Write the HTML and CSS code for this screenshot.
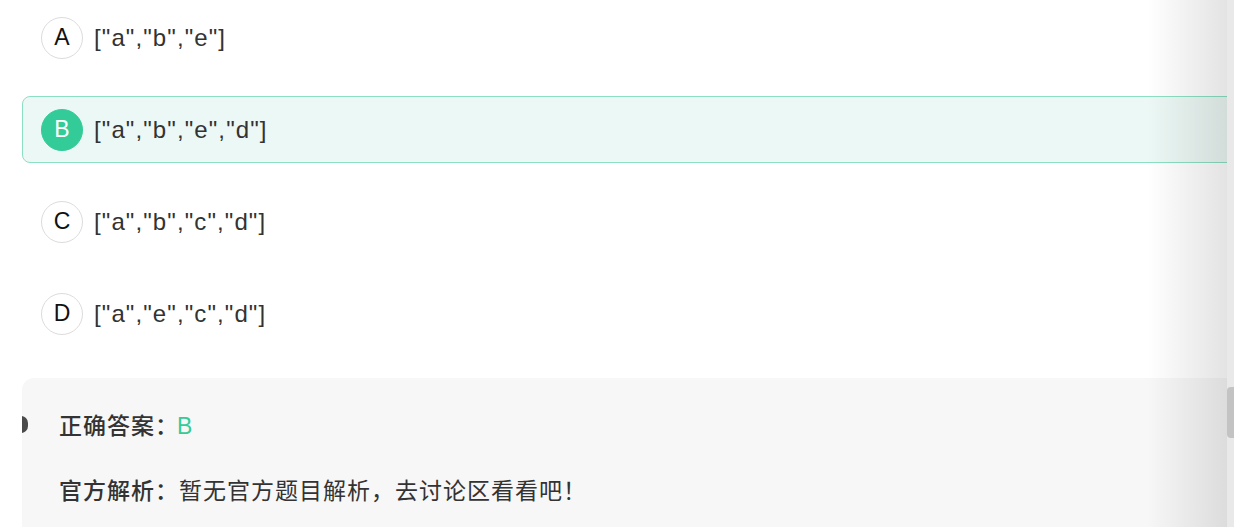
FILE: index.html
```html
<!DOCTYPE html>
<html lang="zh-CN">
<head>
    <meta charset="UTF-8">
    <meta name="viewport" content="width=device-width, initial-scale=1.0">
    <title>题目详情</title>
    <link rel="stylesheet" href="styles.css">
</head>
<body>

<div class="page">
    <div class="content">
        <div class="options">
            <div class="option">
                <span class="letter">A</span>
                <span class="option-text">["a","b","e"]</span>
            </div>
            <div class="option selected">
                <span class="letter">B</span>
                <span class="option-text">["a","b","e","d"]</span>
            </div>
            <div class="option">
                <span class="letter">C</span>
                <span class="option-text">["a","b","c","d"]</span>
            </div>
            <div class="option">
                <span class="letter">D</span>
                <span class="option-text">["a","e","c","d"]</span>
            </div>
        </div>

        <div class="analysis">
            <span class="marker"></span>
            <p class="answer-line"><span class="label">正确答案：</span><span class="answer">B</span></p>
            <p class="analysis-line"><span class="label">官方解析：</span>暂无官方题目解析，去讨论区看看吧！</p>
        </div>

        <div class="edge-shade"></div>
    </div>
    <div class="scrollbar">
        <div class="thumb"></div>
    </div>
</div>

</body>
</html>
```

FILE: styles.css
```css
body {
    margin: 0;
    background-color: #fff;
    font-family: "Liberation Sans", Arial, "Noto Sans CJK SC", sans-serif;
    color: #333;
    overflow: hidden;
}
.page {
    display: flex;
    height: 527px;
}
.content {
    position: relative;
    flex: 1;
    padding: 4px 0 0 22px;
    overflow: hidden;
}
.options {
    display: flex;
    flex-direction: column;
    gap: 25px;
    margin-right: -20px;
}
.option {
    display: flex;
    align-items: center;
    height: 65px;
    padding-left: 18px;
    border: 1px solid transparent;
    border-radius: 8px;
}
.option.selected {
    background-color: #ecf8f5;
    border-color: #8ddfc3;
}
.letter {
    display: flex;
    align-items: center;
    justify-content: center;
    width: 40px;
    height: 40px;
    border: 1px solid #dcdcdc;
    border-radius: 50%;
    font-size: 23px;
    color: #111;
    background-color: #fff;
}
.option.selected .letter {
    background-color: #33cc99;
    border-color: #33cc99;
    color: #fff;
}
.option-text {
    margin-left: 11px;
    font-size: 24px;
    letter-spacing: 1.1px;
}
.analysis {
    position: relative;
    margin-top: 31px;
    padding: 29px 0 40px 37px;
    background-color: #f7f7f7;
    border-radius: 12px 0 0 0;
    overflow: hidden;
}
.marker {
    position: absolute;
    left: -8px;
    top: 38px;
    width: 14px;
    height: 17px;
    border-radius: 7px;
    background-color: #4a4a4a;
}
.analysis p {
    margin: 0;
    font-family: "Noto Sans CJK SC", sans-serif;
    font-size: 23px;
    line-height: 34px;
    letter-spacing: 1px;
}
.analysis .analysis-line {
    margin-top: 29px;
}
.label {
    font-weight: 500;
}
.answer {
    margin-left: -2px;
    color: #33cc99;
    font-family: "Liberation Sans", Arial, sans-serif;
}
.edge-shade {
    position: absolute;
    top: 0;
    right: 0;
    width: 80px;
    height: 100%;
    background: linear-gradient(to right, rgba(0, 0, 0, 0), rgba(0, 0, 0, 0.11));
    pointer-events: none;
}
.scrollbar {
    width: 7px;
    background-color: #e9e9e9;
}
.thumb {
    margin-top: 387px;
    height: 51px;
    border-radius: 4px 0 0 4px;
    background-color: #c3c3c3;
}
```
